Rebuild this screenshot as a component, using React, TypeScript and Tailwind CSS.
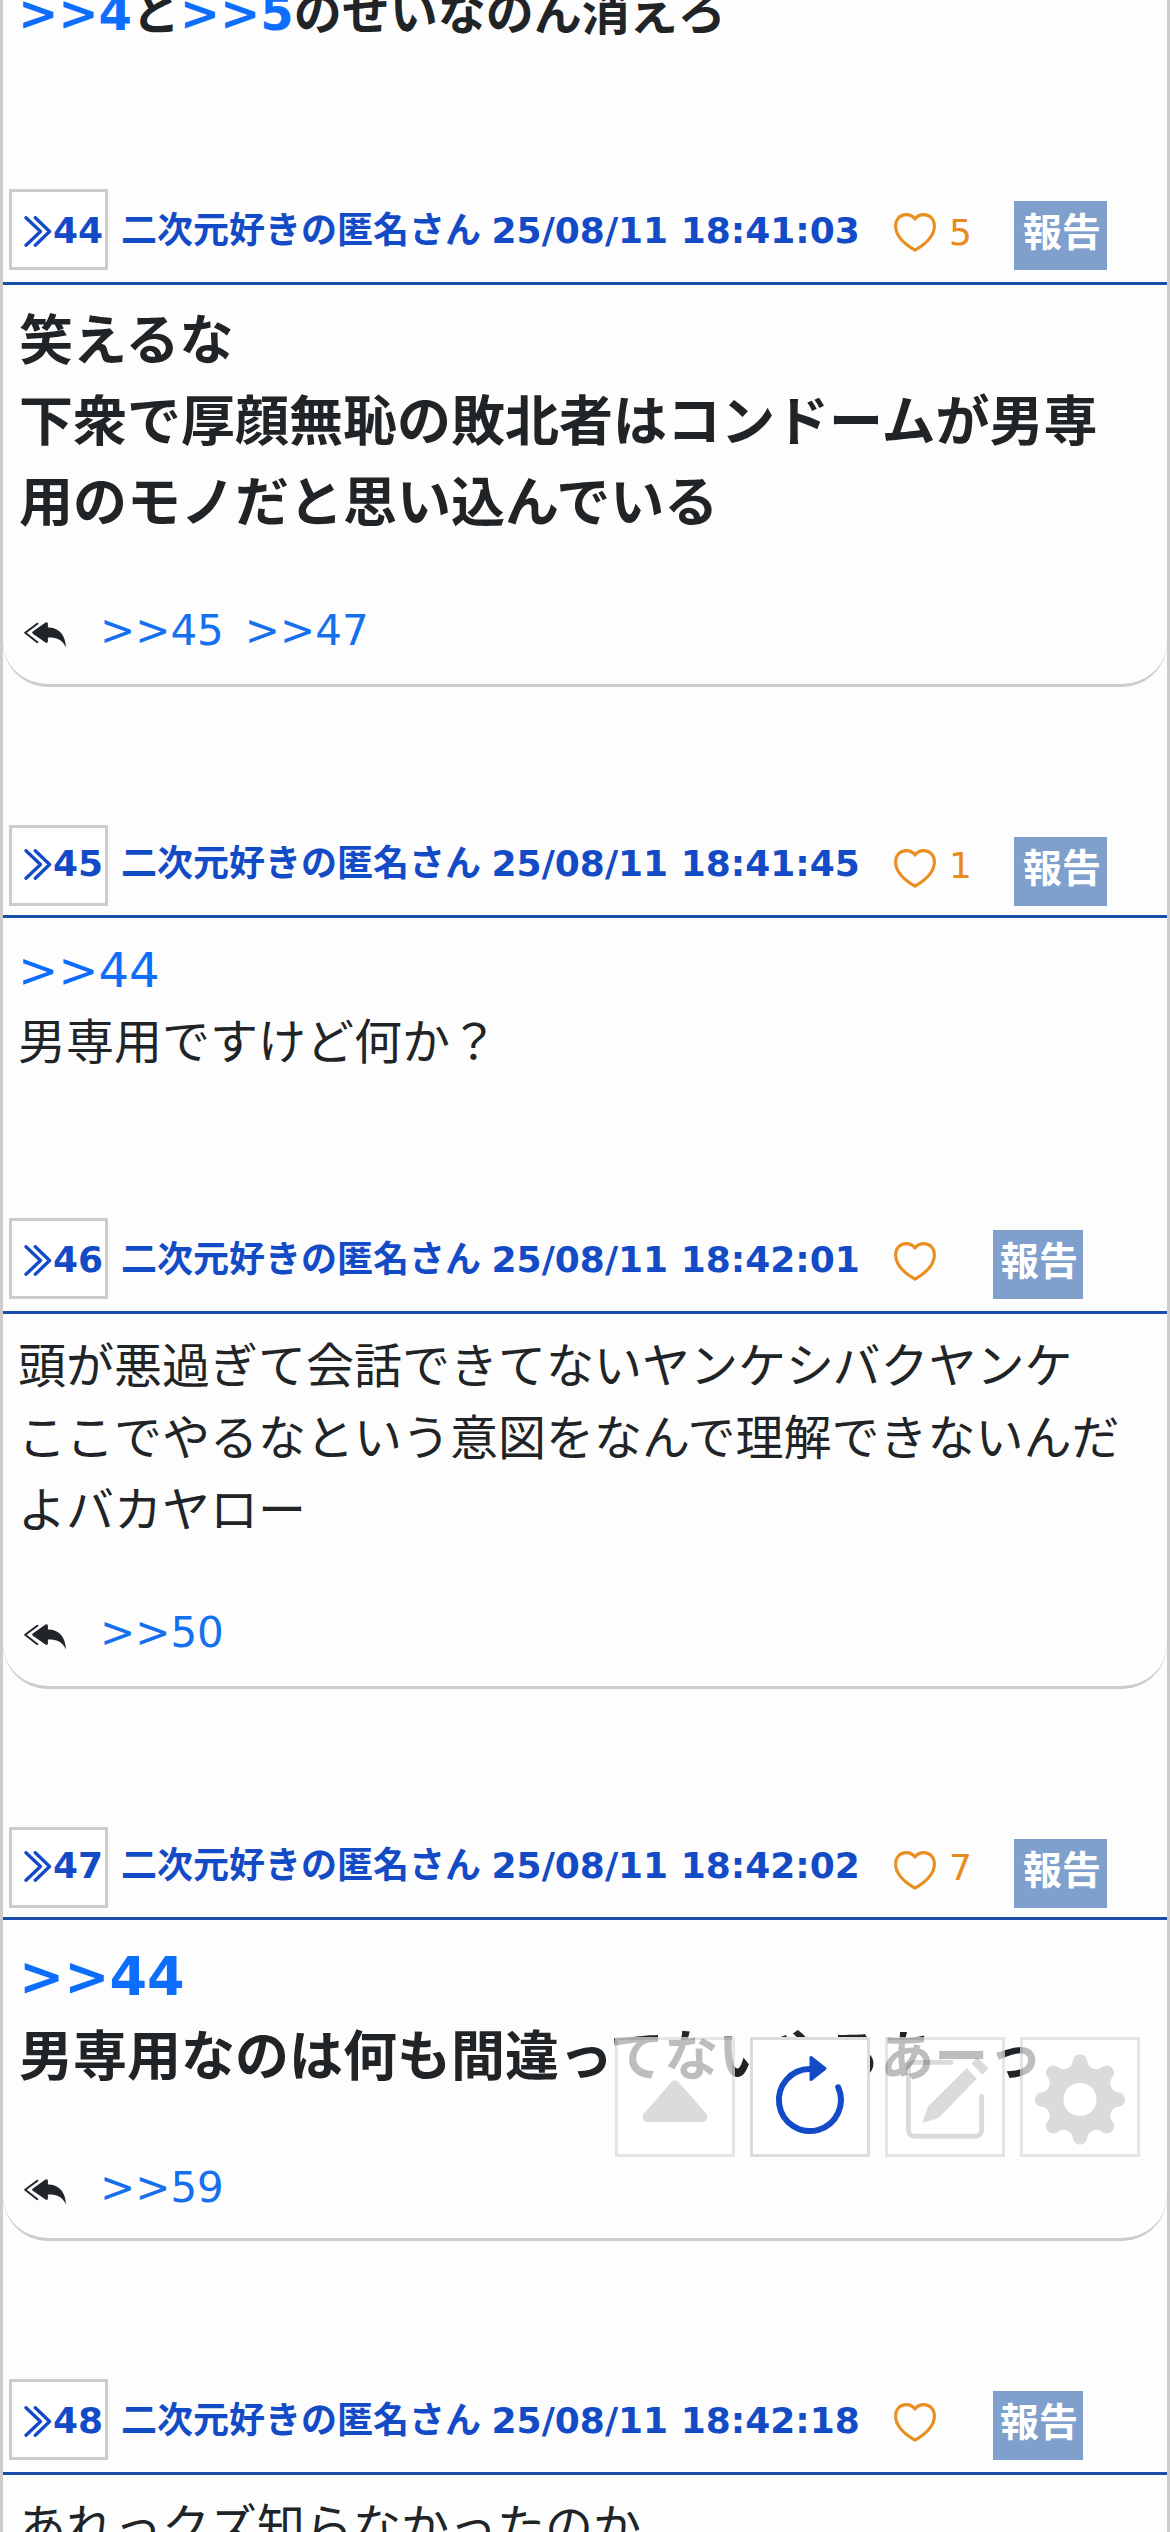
import React from "react";

type Post = {
  id: number;
  time: string;
  likes?: number;
  loose: boolean;
  big?: boolean;
  quote?: string;
  lines: string[];
  replies: string[];
  bodyClass: string;
};

const posts: Post[] = [
  {
    id: 44,
    time: "25/08/11 18:41:03",
    likes: 5,
    loose: true,
    big: true,
    lines: ["笑えるな", "下衆で厚顔無恥の敗北者はコンドームが男専用のモノだと思い込んでいる"],
    replies: [">>45", ">>47"],
    bodyClass: "h-[402px] mb-[135px]",
  },
  {
    id: 45,
    time: "25/08/11 18:41:45",
    likes: 1,
    loose: false,
    quote: ">>44",
    lines: ["男専用ですけど何か？"],
    replies: [],
    bodyClass: "h-[300px]",
  },
  {
    id: 46,
    time: "25/08/11 18:42:01",
    loose: true,
    lines: ["頭が悪過ぎて会話できてないヤンケシバクヤンケ", "ここでやるなという意図をなんで理解できないんだよバカヤロー"],
    replies: [">>50"],
    bodyClass: "h-[375px] mb-[135px]",
  },
  {
    id: 47,
    time: "25/08/11 18:42:02",
    likes: 7,
    loose: false,
    big: true,
    quote: ">>44",
    lines: ["男専用なのは何も間違ってないやろあーっ"],
    replies: [">>59"],
    bodyClass: "h-[321px] mb-[138px]",
  },
  {
    id: 48,
    time: "25/08/11 18:42:18",
    loose: true,
    lines: ["あれっクズ知らなかったのか"],
    replies: [],
    bodyClass: "h-[200px]",
  },
];

function Chevrons() {
  return (
    <svg className="mb-[2px] h-[31px] w-[28px] shrink-0" viewBox="0 0 28 31" fill="none" stroke="currentColor" strokeWidth="3.3" strokeLinecap="round" strokeLinejoin="round">
      <path d="M2 1.7 16.5 15.5 2 29.3M11.3 1.7 25.6 15.5 11.3 29.3" />
    </svg>
  );
}

function Heart() {
  return (
    <svg className="h-[39px] w-[42px]" viewBox="0 0 42 39" fill="none" stroke="currentColor" strokeWidth="3.1" strokeLinejoin="round">
      <path d="M21 6C18.8 3 15.5 1.6 12.3 1.6C6 1.6 1.6 6.3 1.6 13C1.6 22 9.5 30.5 21 37.2C32.5 30.5 40.4 22 40.4 13C40.4 6.3 36 1.6 29.7 1.6C26.5 1.6 23.2 3 21 6Z" />
    </svg>
  );
}

function ReplyAll() {
  return (
    <svg className="mb-[4px] h-[26px] w-[42px]" viewBox="0 0 42 26">
      <path d="M13.3 1.7 1.2 10.8 13.3 20.2" fill="none" stroke="#212529" strokeWidth="2" strokeLinecap="round" strokeLinejoin="round" />
      <path d="M8.8 9.6 21.5 .6Q23.8 -.4 23.9 1.8V5.5C33 5.5 41.5 11 42 25.5C38 17 32 15.2 23.9 15.4V19.2Q23.8 21.6 21.5 20.6L8.8 11.8Q7.6 10.7 8.8 9.6Z" fill="#212529" />
    </svg>
  );
}

function Header({ post }: { post: Post }) {
  const loose = post.loose;
  return (
    <header className="flex h-[96px] items-end border-b-[3px] border-[#1b4dab] pl-[6px] font-bold text-[#134bc6]">
      <div
        className={`flex h-[81px] w-[99px] shrink-0 items-end overflow-hidden border-[3px] border-[#ccc] bg-white pl-[12px] ${
          loose ? "mb-[12px] pb-[18px]" : "mb-[9px] pb-[21px]"
        }`}
      >
        <Chevrons />
        <span className="ml-[1px] text-[36px] leading-[36px]">{post.id}</span>
      </div>
      <span className="mb-[33px] ml-[13px] w-[773px] shrink-0 text-[36px] leading-[36px] whitespace-nowrap">
        二次元好きの匿名さん <span className="-ml-[2px]">{post.time}</span>
      </span>
      <span className={`flex h-[57px] shrink-0 items-start text-[#e98f20] ${loose ? "mb-[12px]" : "mb-[9px]"}`}>
        <Heart />
      </span>
      {post.likes !== undefined && (
        <span className="mb-[31px] ml-[13px] w-[23px] shrink-0 text-[36px] leading-[36px] font-normal text-[#e98a1c]">{post.likes}</span>
      )}
      <button
        className={`flex h-[69px] shrink-0 items-start bg-[#7f9fcd] pt-[7px] text-[39px] leading-[50px] font-bold whitespace-nowrap text-white ${
          loose ? "mb-[12px]" : "mb-[9px]"
        } ${post.likes !== undefined ? "ml-[42px] w-[93px] pl-[9px]" : "ml-[57px] w-[90px] pl-[7px]"}`}
      >
        報告
      </button>
    </header>
  );
}

function PostView({ post }: { post: Post }) {
  return (
    <article>
      <Header post={post} />
      <div
        className={`flex flex-col justify-between pt-[16px] ${post.bodyClass} ${
          post.replies.length > 0 ? "rounded-b-[45px] border-b-[3px] border-[#ccc]" : ""
        }`}
      >
        <div className={`break-all ${post.big ? "pr-[24px] pl-[16px] text-[54px] leading-[81px] font-bold" : "pr-[15px] pl-[15px] text-[48px] leading-[72px]"}`}>
          {post.quote && <p className="text-[#0d6efd]">{post.quote}</p>}
          {post.lines.map((line) => (
            <p key={line}>{line}</p>
          ))}
        </div>
        {post.replies.length > 0 && (
          <div className={`flex items-end pl-[21px] ${post.loose ? "pb-[32px]" : "pb-[29px]"}`}>
            <ReplyAll />
            <div className="ml-[34px] flex gap-[21px] text-[42px] leading-[42px] text-[#1470ee]">
              {post.replies.map((r) => (
                <a key={r}>{r}</a>
              ))}
            </div>
          </div>
        )}
      </div>
    </article>
  );
}

// Eight round lobes joined by shallow valleys, with a round hole in the middle.
function gearPath(cx: number, cy: number) {
  const at = (step: number, u: number, v: number) => {
    const a = (step * Math.PI) / 4;
    const x = cx + u * Math.cos(a) + v * Math.sin(a);
    const y = cy + u * Math.sin(a) - v * Math.cos(a);
    return `${x.toFixed(2)} ${y.toFixed(2)}`;
  };
  let d = `M${at(0, -7.3, 37.5)}`;
  for (let i = 0; i < 8; i++) {
    d += `C${at(i, -7.3, 47.5)} ${at(i, 7.3, 47.5)} ${at(i, 7.3, 37.5)}`;
    d += `C${at(i, 8, 34.5)} ${at(i, 10, 32.2)} ${at(i, 12.8, 31)}`;
    d += `C${at(i + 1, -10, 32.2)} ${at(i + 1, -8, 34.5)} ${at(i + 1, -7.3, 37.5)}`;
  }
  return `${d}ZM${cx - 16.6} ${cy}a16.6 16.6 0 1 0 33.2 0a16.6 16.6 0 1 0 -33.2 0Z`;
}

function ToolButton({ active, children }: { active?: boolean; children: React.ReactNode }) {
  return (
    <button className={`h-[120px] w-[120px] border-[3px] ${active ? "border-[#dcdcdc] bg-white text-[#134bc6]" : "border-black/10 bg-white/70 text-black"}`}>
      <svg className={`-m-[3px] h-[120px] w-[120px] ${active ? "" : "opacity-[0.137]"}`} viewBox="0 0 120 120" fill="none" stroke="currentColor" strokeLinecap="round" strokeLinejoin="round">
        {children}
      </svg>
    </button>
  );
}

function Toolbar() {
  return (
    <nav className="absolute top-[2037px] right-[27px] flex gap-[15px]">
      <ToolButton>
        <path d="M60 48.5 32.5 80H87.5Z" fill="currentColor" strokeWidth="10" />
      </ToolButton>
      <ToolButton active>
        <path d="M60 32A31 31 0 1 0 88.2 50.3" strokeWidth="6" />
        <path d="M61 20.5V42.5L75 31.5Z" fill="currentColor" strokeWidth="3" />
      </ToolButton>
      <ToolButton>
        <path d="M66 25.4H29.4a6 6 0 0 0-6 6V93.3a6 6 0 0 0 6 6H90.6a6 6 0 0 0 6-6V59.4" strokeWidth="4.9" />
        <path d="M81.7 31 91.7 41.7 55 79.5Q53.5 81 51.5 81.7L39 85.5Q37.5 85.8 38 84.2L42.3 71.5Q42.8 69.7 44 68.5Z" fill="currentColor" stroke="none" />
        <path d="M86.3 26.3 90.8 21.5Q92.3 20 93.8 21.5L102 29.8Q103.5 31.3 102.2 32.7L97.3 37.7Z" fill="currentColor" stroke="none" />
      </ToolButton>
      <ToolButton>
        <path d={gearPath(60, 62.5)} fill="currentColor" fillRule="evenodd" stroke="none" />
      </ToolButton>
    </nav>
  );
}

export default function App() {
  return (
    <main className="relative h-[2532px] w-[1170px] overflow-hidden border-x-[3px] border-[#ccc] bg-[#fdfdfd] font-['DejaVu_Sans','Noto_Sans_CJK_JP',sans-serif] text-[#212427]">
      <div className="h-[189px]">
        <p className="relative -top-[23px] pl-[15px] text-[48px] leading-[72px] font-bold whitespace-nowrap">
          <a className="text-[#0d6efd]">&gt;&gt;4</a>と<a className="text-[#0d6efd]">&gt;&gt;5</a>のせいなのん消えろ
        </p>
      </div>
      {posts.map((post) => (
        <PostView key={post.id} post={post} />
      ))}
      <Toolbar />
    </main>
  );
}
